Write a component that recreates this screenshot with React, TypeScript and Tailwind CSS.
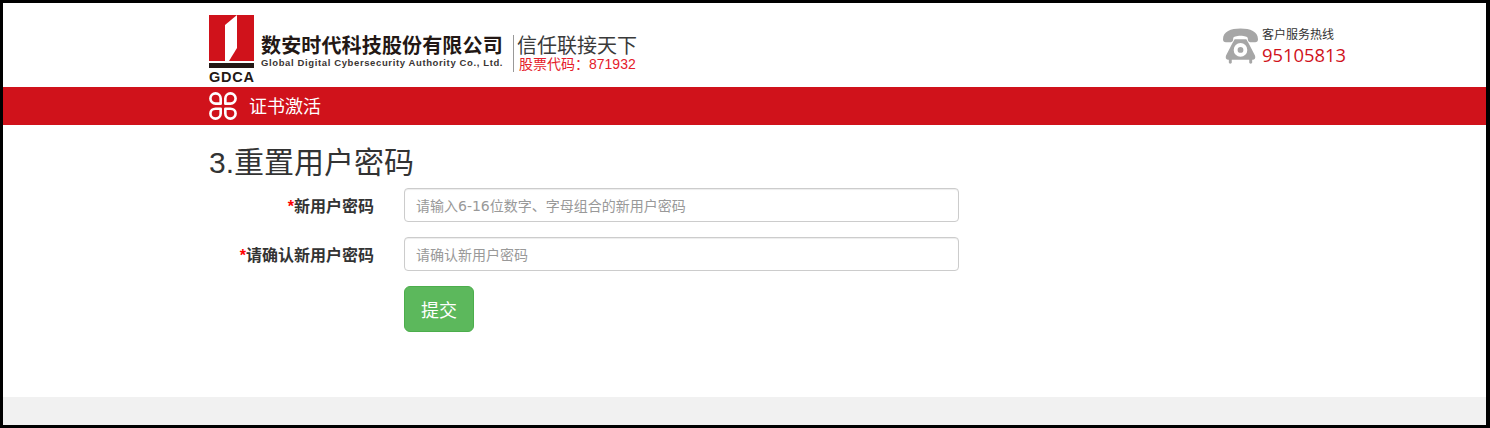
const CJK = "font-['Liberation_Sans','Noto_Sans_CJK_SC',sans-serif]";

function LogoMark() {
  return (
    <svg width="46" height="54" viewBox="0 0 46 54" className="shrink-0">
      <rect x="0" y="0" width="45" height="46" fill="#d0121b" />
      <path d="M16 10 L28 0 L28 33 L20 46 L16 46 Z" fill="#fff" />
      <rect x="0" y="48" width="45" height="5" fill="#231815" />
    </svg>
  );
}

function PetalIcon() {
  return (
    <svg width="28" height="28" viewBox="0 0 30 30" fill="none" stroke="#fff" strokeWidth="2.8" strokeLinejoin="round">
      <path d="M12.5 12.5 V7 A5.5 5.5 0 0 0 1.5 7 C1.5 10 4 12.5 7 12.5 Z" />
      <path d="M17.5 12.5 V7 A5.5 5.5 0 0 1 28.5 7 C28.5 10 26 12.5 23 12.5 Z" />
      <path d="M12.5 18 H7 C4 18 1.5 20 1.5 23 A5.5 5.5 0 0 0 12.5 23 Z" />
      <path d="M17.5 18 H23 C26 18 28.5 20 28.5 23 A5.5 5.5 0 0 1 17.5 23 Z" />
    </svg>
  );
}

function PhoneIcon() {
  return (
    <svg width="35" height="37" viewBox="0 0 36 37" className="shrink-0">
      <path
        fill="#a6a6a6"
        fillRule="evenodd"
        d="M0 11 C0 3 8 0 18 0 C28 0 36 3 36 11 C36 13 35 14 33 14 H28 C26 14 25.5 12.5 25.5 10 C25.5 8.5 22 7.5 18 7.5 C14 7.5 10.5 8.5 10.5 10 C10.5 12.5 10 14 8 14 H3 C1 14 0 13 0 11 Z M12 11 H24 L26.5 15.5 L33 28 C33.5 30 33 32 31 32 H30 V35 C30 36.5 27 36.5 27 35 V32 H9 V35 C9 36.5 6 36.5 6 35 V32 H5 C3 32 2.5 30 3 28 L9.5 15.5 Z M18 15 A7 7 0 1 0 18 29 A7 7 0 1 0 18 15 Z M18 19 A3 3 0 1 1 18 25 A3 3 0 1 1 18 19 Z"
      />
    </svg>
  );
}

function Field({ label, placeholder }: { label: string; placeholder: string }) {
  return (
    <div className="flex items-center gap-[30px]">
      <label className="w-[165px] pt-1 text-right text-base leading-[22px] font-bold text-[#333]">
        <span className="text-[#f00]">*</span>
        {label}
      </label>
      <input
        type="text"
        placeholder={placeholder}
        className="h-[34px] w-[555px] rounded border border-[#ccc] bg-white pt-[2px] pr-3 pl-[11px] font-['DejaVu_Sans','Noto_Sans_CJK_SC',sans-serif] text-sm text-[#555] shadow-[inset_0_1px_1px_rgba(0,0,0,0.075)] placeholder:text-[#999]"
      />
    </div>
  );
}

export default function App() {
  return (
    <div className={`${CJK} flex h-[428px] w-full flex-col border-[3px] border-r-4 border-black bg-white`}>
      <header className="flex h-[84px] shrink-0 justify-between pr-[139px] pl-[206px]">
        <div className="flex">
          <div className="relative mt-3 h-[72px] w-[52px]">
            <LogoMark />
            <span className="absolute top-[54px] left-0 text-[14.5px] leading-4 font-bold tracking-[0.75px] text-[#231815]">
              GDCA
            </span>
          </div>
          <div className="mt-[31px] flex">
            <div className="w-[252px]">
              <div className="text-[20px] leading-6 font-bold tracking-[0.15px] whitespace-nowrap text-[#231815]">
                数安时代科技股份有限公司
              </div>
              <div className="-mt-px text-[9.5px] leading-3 font-bold tracking-[0.62px] whitespace-nowrap text-[#3a3533]">
                Global Digital Cybersecurity Authority Co., Ltd.
              </div>
            </div>
            <div className="mt-px h-[37px] border-l border-[#999] pl-[3px]">
              <div className="text-[20px] leading-[22px] whitespace-nowrap text-[#3a3a3a]">信任联接天下</div>
              <div className="ml-[2px] text-[14px] leading-[15px] whitespace-nowrap text-[#e5202a]">
                股票代码：871932
              </div>
            </div>
          </div>
        </div>
        <div className="mt-[25px] flex h-[37px] gap-1">
          <PhoneIcon />
          <div className="w-[85px]">
            <div className="text-xs leading-[14px] text-[#333]">客户服务热线</div>
            <div className="mt-[2px] font-['Open_Sans',sans-serif] text-[18.4px] leading-[22px] text-[#d0121b]">
              95105813
            </div>
          </div>
        </div>
      </header>

      <nav className="flex h-[38px] shrink-0 items-center gap-3 bg-[#d0121b] pl-[206px]">
        <PetalIcon />
        <span className="pt-[2px] text-lg leading-6 text-white">证书激活</span>
      </nav>

      <main className="flex-1 pl-[206px]">
        <h3 className="mt-[21px] mb-[9px] text-[30px] leading-[33px] font-normal text-[#333]">3.重置用户密码</h3>
        <form className="flex flex-col gap-[15px]">
          <Field label="新用户密码" placeholder="请输入6-16位数字、字母组合的新用户密码" />
          <Field label="请确认新用户密码" placeholder="请确认新用户密码" />
          <div className="pl-[195px]">
            <button
              type="button"
              className="h-[46px] w-[70px] rounded-md border border-[#4cae4c] bg-[#5cb85c] pt-[3px] text-lg text-white"
            >
              提交
            </button>
          </div>
        </form>
      </main>

      <footer className="h-[28px] shrink-0 bg-[#f1f1f1]" />
    </div>
  );
}
